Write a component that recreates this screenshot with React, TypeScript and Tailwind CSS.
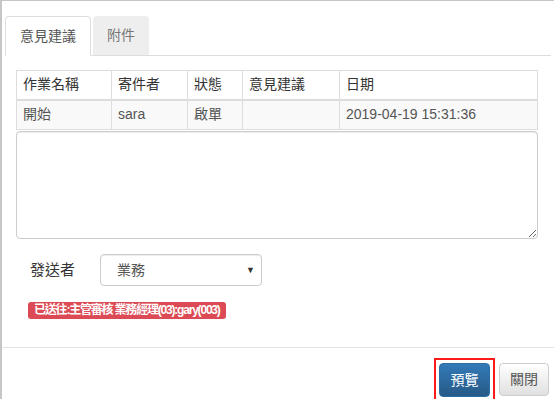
export default function App() {
  const font = { fontFamily: '"Liberation Sans", "Noto Sans CJK TC", sans-serif' };
  const cols = [
    { label: "作業名稱", w: "w-[95px]", v: "開始" },
    { label: "寄件者", w: "w-[76px]", v: "sara" },
    { label: "狀態", w: "w-[55px]", v: "啟單" },
    { label: "意見建議", w: "w-[97px]", v: "" },
    { label: "日期", w: "", v: "2019-04-19 15:31:36" },
  ];

  return (
    <div style={font} className="w-[554px] h-[399px] overflow-hidden bg-white border-t border-l-2 border-[#c6c6c6] text-[#333] text-[14px]">
      {/* tabs */}
      <div className="pt-[15px] ml-[3px] w-[546px]">
        <div className="flex border-b border-[#ddd]">
          <div className="-mb-px h-[40px] px-[14px] flex items-center bg-white border border-[#ddd] border-b-white rounded-t-[4px] text-[#555]">
            意見建議
          </div>
          <div className="-mb-px ml-[2px] h-[39px] px-[14px] flex items-center bg-[#eee] rounded-t-[4px] text-[#777]">
            附件
          </div>
        </div>
      </div>

      {/* history table */}
      <div className="ml-[14px] mt-[14px] w-[522px]">
        <table className="w-full border-collapse border border-[#ddd]">
          <thead>
            <tr className="h-[29px]">
              {cols.map((c) => (
                <th key={c.label} className={`${c.w} border border-[#ddd] px-[6px] text-left font-normal text-[#333]`}>
                  {c.label}
                </th>
              ))}
            </tr>
          </thead>
          <tbody>
            <tr className="h-[30px] bg-[#f9f9f9]">
              {cols.map((c) => (
                <td key={c.label} className="border border-[#ddd] border-t-2 px-[6px] text-[#555]">
                  {c.v}
                </td>
              ))}
            </tr>
          </tbody>
        </table>
        <textarea className="block mt-[1px] w-full h-[108px] border border-[#ccc] rounded-[4px] shadow-[inset_0_1px_1px_rgba(0,0,0,0.075)] outline-none" />
      </div>

      {/* sender */}
      <div className="flex items-center mt-[15px] ml-[28px]">
        <div className="w-[70px] text-[15px] text-[#333]">發送者</div>
        <div className="relative w-[162px] h-[32px] border border-[#ccc] rounded-[4px] flex items-center pl-[16px] text-[#555] shadow-[inset_0_1px_1px_rgba(0,0,0,0.075)]">
          業務
          <span className="absolute right-[6px] top-[9px] text-[9px] text-[#333]">▼</span>
        </div>
      </div>

      <div className="ml-[26px] mt-[13px]">
        <span className="inline-block h-[17px] leading-[17px] px-[6px] rounded-[3px] bg-[#dc4b55] text-white text-[12px] font-bold tracking-[-1.2px]">
          已送往:主管審核 業務經理(03):gary(003)
        </span>
      </div>

      {/* footer */}
      <div className="mt-[27px] border-t border-[#e5e5e5] flex justify-end items-start pt-[10px] pr-[5px]">
        <div className="border-2 border-[#ff1a1a] p-[3px]">
          <button className="block w-[51px] h-[34px] rounded-[4px] border border-[#2e6da4] bg-gradient-to-b from-[#337ab7] to-[#265a88] text-white text-[14px]">
            預覽
          </button>
        </div>
        <button className="ml-[4px] mt-[5px] w-[50px] h-[33px] rounded-[4px] border border-[#ccc] bg-gradient-to-b from-white to-[#e0e0e0] text-[#555] text-[14px]">
          關閉
        </button>
      </div>
    </div>
  );
}
